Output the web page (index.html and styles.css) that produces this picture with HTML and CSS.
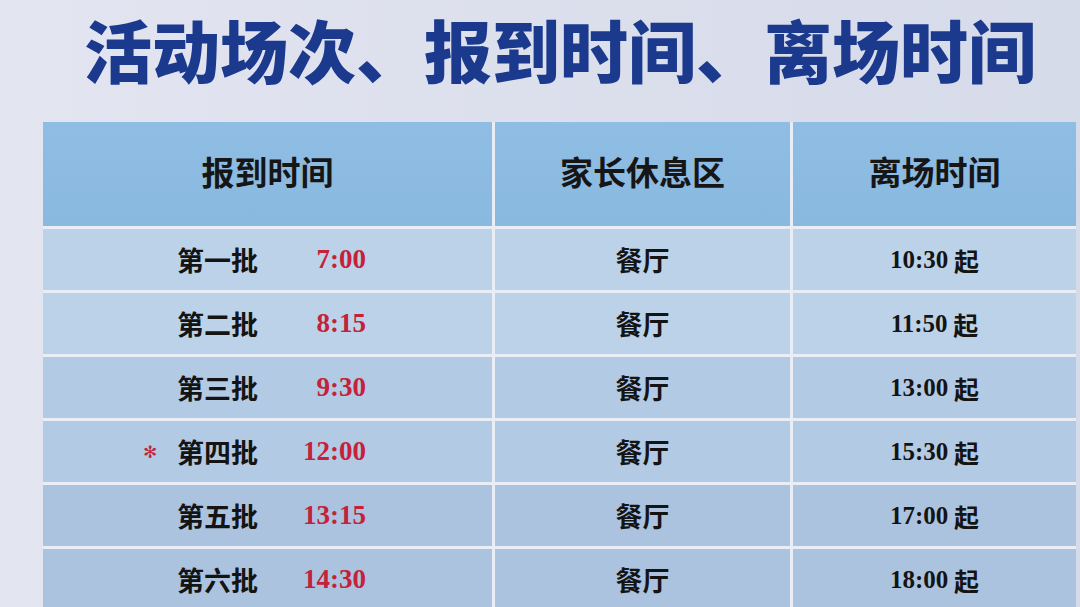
FILE: index.html
```html
<!DOCTYPE html>
<html lang="zh-CN">
<head>
<meta charset="utf-8">
<title>活动场次、报到时间、离场时间</title>
<link rel="stylesheet" href="styles.css">
</head>
<body>
<div class="poster">
  <h1 class="title">活动场次、报到时间、离场时间</h1>
  <div class="table">
    <div class="cell head">报到时间</div>
    <div class="cell head">家长休息区</div>
    <div class="cell head">离场时间</div>

    <div class="cell c1"><span class="label">第一批</span><span class="time">7:00</span></div>
    <div class="cell c2">餐厅</div>
    <div class="cell c3"><span class="num">10:30</span> 起</div>

    <div class="cell c1"><span class="label">第二批</span><span class="time">8:15</span></div>
    <div class="cell c2">餐厅</div>
    <div class="cell c3"><span class="num">11:50</span> 起</div>

    <div class="cell c1"><span class="label">第三批</span><span class="time">9:30</span></div>
    <div class="cell c2">餐厅</div>
    <div class="cell c3"><span class="num">13:00</span> 起</div>

    <div class="cell c1"><span class="label"><span class="mark">✻</span>第四批</span><span class="time">12:00</span></div>
    <div class="cell c2">餐厅</div>
    <div class="cell c3"><span class="num">15:30</span> 起</div>

    <div class="cell c1"><span class="label">第五批</span><span class="time">13:15</span></div>
    <div class="cell c2">餐厅</div>
    <div class="cell c3"><span class="num">17:00</span> 起</div>

    <div class="cell c1"><span class="label">第六批</span><span class="time">14:30</span></div>
    <div class="cell c2">餐厅</div>
    <div class="cell c3"><span class="num">18:00</span> 起</div>
  </div>
</div>
</body>
</html>
```
FILE: styles.css
```css
html, body {
  margin: 0;
  padding: 0;
}
body {
  width: 1080px;
  height: 607px;
  overflow: hidden;
  background: linear-gradient(90deg, #e3e6f1 0%, #dcdfec 50%, #d6dbea 100%);
  font-family: "Noto Sans CJK SC", "Noto Sans", sans-serif;
}
.poster {
  display: flex;
  flex-direction: column;
}
.title {
  margin: 0;
  padding: 0 0 0 84px;
  height: 122px;
  box-sizing: border-box;
  font-size: 68px;
  line-height: 98px;
  font-weight: 900;
  color: #1b3a8e;
  letter-spacing: 0;
  white-space: nowrap;
}
.table {
  margin-left: 43px;
  width: 1033px;
  display: grid;
  grid-template-columns: 449px 295px 283px;
  grid-template-rows: 104px repeat(6, 61px);
  gap: 3px;
  background: #e9eef6;
}
.cell {
  display: flex;
  align-items: center;
  justify-content: center;
  color: #141414;
  font-weight: 700;
  background: #b6cde6;
}
.head {
  background: linear-gradient(180deg, #8fbde3 0%, #8ab9e0 100%);
  font-size: 33px;
  font-weight: 700;
  color: #161616;
  padding-bottom: 6px;
}
.cell:nth-child(n+4):nth-child(-n+9) { background: #bcd2e9; }
.cell:nth-child(n+10):nth-child(-n+15) { background: #b3cae4; }
.cell:nth-child(n+16) { background: #abc3df; }
.c1 {
  justify-content: flex-start;
  padding-left: 134px;
  font-size: 27px;
}
.label {
  position: relative;
  width: 84px;
  font-family: "Noto Sans CJK SC", serif;
  font-weight: 700;
}
.mark {
  position: absolute;
  left: -34px;
  top: 50%;
  transform: translateY(-50%);
  color: #c0283a;
  font-family: "DejaVu Sans", sans-serif;
  font-size: 17px;
  line-height: 1;
}
.time {
  width: 105px;
  text-align: right;
  color: #c4213a;
  font-family: "Liberation Serif", serif;
  font-weight: 700;
  font-size: 27px;
}
.c2 {
  font-size: 27px;
}
.c3 {
  font-size: 25px;
  white-space: pre;
}
.num {
  font-family: "Liberation Serif", serif;
  font-weight: 700;
  font-size: 25px;
}
```
